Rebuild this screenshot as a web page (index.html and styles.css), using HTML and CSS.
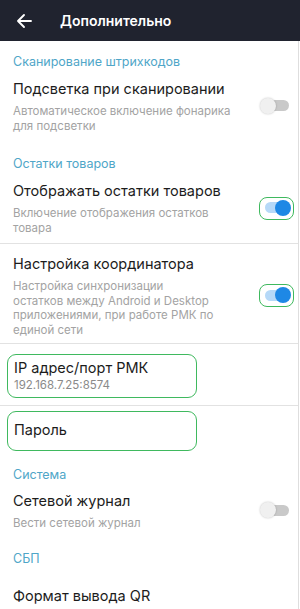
FILE: index.html
```html
<!DOCTYPE html>
<html lang="ru">
<head>
<meta charset="utf-8">
<link rel="stylesheet" href="styles.css">
</head>
<body>
<header class="topbar">
  <svg class="back" width="16" height="16" viewBox="0 0 16 16"><path d="M15 8H2M8 2L2 8l6 6" fill="none" stroke="#fff" stroke-width="1.9" stroke-linecap="round" stroke-linejoin="round"/></svg>
  <span class="title">Дополнительно</span>
</header>
<main class="content">
  <div class="section-title s1">Сканирование штрихкодов</div>
  <div class="row r1">
    <div class="text">
      <div class="label">Подсветка при сканировании</div>
      <div class="desc">Автоматическое включение фонарика<br>для подсветки</div>
    </div>
    <div class="toggle off"><span class="track"></span><span class="thumb"></span></div>
  </div>

  <div class="section-title s2">Остатки товаров</div>
  <div class="row r2">
    <div class="text">
      <div class="label">Отображать остатки товаров</div>
      <div class="desc">Включение отображения остатков<br>товара</div>
    </div>
    <div class="toggle on marked"><span class="track"></span><span class="thumb"></span></div>
  </div>
  <div class="divider d1"></div>

  <div class="row r3">
    <div class="text">
      <div class="label">Настройка координатора</div>
      <div class="desc">Настройка синхронизации<br>остатков между Android и Desktop<br>приложениями, при работе РМК по<br>единой сети</div>
    </div>
    <div class="toggle on marked"><span class="track"></span><span class="thumb"></span></div>
  </div>
  <div class="divider d2"></div>

  <div class="box ip">
    <div class="label">IP адрес/порт РМК</div>
    <div class="value">192.168.7.25:8574</div>
  </div>
  <div class="divider d3"></div>
  <div class="box pwd">
    <div class="label">Пароль</div>
  </div>

  <div class="section-title s3">Система</div>
  <div class="row r4">
    <div class="text">
      <div class="label">Сетевой журнал</div>
      <div class="desc">Вести сетевой журнал</div>
    </div>
    <div class="toggle off"><span class="track"></span><span class="thumb"></span></div>
  </div>

  <div class="section-title s4">СБП</div>
  <div class="row r5">
    <div class="text">
      <div class="label">Формат вывода QR</div>
    </div>
  </div>
</main>
</body>
</html>
```
FILE: styles.css
```css
* { box-sizing: border-box; }
html, body { margin: 0; padding: 0; background: #fff; }
body {
  width: 300px;
  height: 609px;
  overflow: hidden;
  font-family: "Inter", "Noto Sans", sans-serif;
  color: #1c1c1c;
}
.topbar {
  height: 41px;
  background: #20232f;
  display: flex;
  align-items: center;
  padding-left: 16px;
}
.back { margin-right: 28px; }
.title {
  color: #fff;
  font-size: 14px;
  font-weight: 600;
}
.content {
  width: 299px;
  height: 568px;
  border-right: 1px solid #dedede;
  padding-top: 13px;
}
.section-title {
  color: #4fa6c8;
  font-size: 12.5px;
  line-height: 16px;
  padding-left: 13px;
}
.row {
  display: flex;
  align-items: center;
  justify-content: space-between;
  padding-left: 13px;
  padding-right: 4px;
}
.label {
  font-size: 14.5px;
  line-height: 20px;
}
.desc {
  color: #a3a3a3;
  font-size: 11.5px;
  line-height: 14.5px;
  margin-top: 5px;
}
.r1 { margin-top: 9px; }
.s2 { margin-top: 23px; }
.r2 { margin-top: 9px; }
.d1 { margin-top: 8px; }
.r3 { margin-top: 10px; }
.d2 { margin-top: 6px; }
.divider {
  height: 1px;
  background: #e2e2e2;
}
.toggle {
  position: relative;
  width: 35px;
  height: 23px;
  border: 1.5px solid transparent;
  border-radius: 8px;
  flex: none;
}
.toggle.marked { border-color: #3fb95e; }
.track {
  position: absolute;
  left: 5px;
  top: 4.5px;
  width: 24px;
  height: 11px;
  border-radius: 6px;
}
.thumb {
  position: absolute;
  top: 2px;
  width: 16px;
  height: 16px;
  border-radius: 50%;
}
.on .track { background: #b6d9f8; }
.on .thumb { left: 15px; background: #1e88e5; }
.off .track { background: #c9c9c9; }
.off .thumb { left: 0px; background: #f0f0f0; box-shadow: 0 0 2px rgba(0,0,0,0.25); }
.box {
  margin-left: 7px;
  width: 190px;
  border: 1.5px solid #3fb95e;
  border-radius: 9px;
  padding-left: 6px;
}
.ip {
  margin-top: 10px;
  height: 44px;
  padding-top: 3px;
}
.ip .value {
  color: #8a8a8a;
  font-size: 11.5px;
  line-height: 15px;
}
.d3 { margin-top: 7px; }
.pwd {
  margin-top: 5px;
  height: 40px;
  padding-top: 8px;
}
.s3 { margin-top: 16px; }
.r4 { margin-top: 8px; }
.s4 { margin-top: 20px; }
.r5 { margin-top: 19px; }
```
